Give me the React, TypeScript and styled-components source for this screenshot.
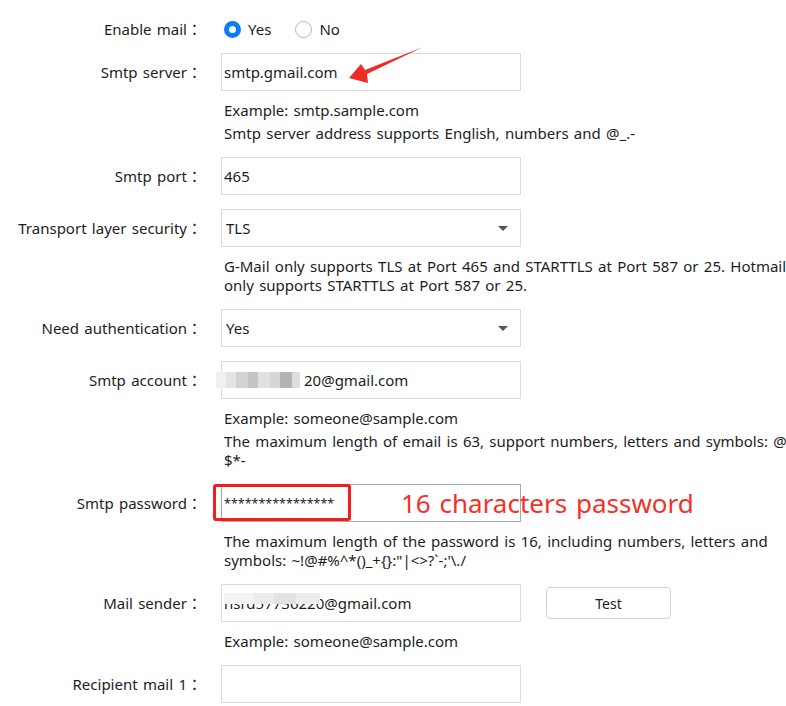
import React from 'react';
import styled, { createGlobalStyle } from 'styled-components';

const Global = createGlobalStyle`
  html, body { margin: 0; padding: 0; background: #fff; overflow: hidden; }
  body {
    font-family: "Noto Sans", "Noto Sans CJK TC", sans-serif;
    color: #1d1d1d;
    font-size: 15px;
    word-spacing: 1.4px;
  }
`;

const Page = styled.div`
  position: relative;
  width: 786px;
  height: 706px;
  overflow: hidden;
`;

const Form = styled.div`
  display: flex;
  flex-direction: column;
`;

const Row = styled.div<{ $first?: boolean }>`
  display: grid;
  grid-template-columns: 205px 1fr;
  column-gap: 16px;
  padding-top: ${(p) => (p.$first ? '10px' : '0')};
  padding-bottom: ${(p) => (p.$first ? '5px' : '14px')};
`;

const Label = styled.div`
  height: 38px;
  line-height: 38px;
  text-align: right;
  white-space: nowrap;
  padding-right: 3px;
`;

const Colon = styled.span`
  font-family: "Noto Sans CJK TC", sans-serif;
`;

const Controls = styled.div`
  position: relative;
  display: flex;
  align-items: center;
  gap: 25px;
  height: 38px;
`;

const Field = styled.div<{ $focused?: boolean }>`
  position: relative;
  box-sizing: border-box;
  width: 300px;
  height: 38px;
  border: 1px solid ${(p) => (p.$focused ? '#a9a9a9' : '#dcdcdc')};
  background: #fff;
  display: flex;
  align-items: center;
  padding-left: 2px;
  white-space: nowrap;
`;

const Select = styled(Field)`
  padding-left: 4px;
  justify-content: space-between;
  padding-right: 12px;
`;

const Caret = styled.span`
  width: 0;
  height: 0;
  border-left: 5px solid transparent;
  border-right: 5px solid transparent;
  border-top: 5px solid #555;
`;

const Secret = styled.span`
  font-size: 12.5px;
`;

const Masked = styled.span<{ $indent: number }>`
  padding-left: ${(p) => p.$indent}px;
`;

const Mosaic = styled.span<{ $left: number; $top: number; $h: number }>`
  position: absolute;
  left: ${(p) => p.$left}px;
  top: ${(p) => p.$top}px;
  height: ${(p) => p.$h}px;
  display: flex;
`;

const Cell = styled.span<{ $tone: string; $w: number }>`
  width: ${(p) => p.$w}px;
  height: 100%;
  background: ${(p) => p.$tone};
`;

const Hint = styled.div`
  grid-column: 2;
  padding-top: 10px;
  width: 570px;
  line-height: 19px;
  display: flex;
  flex-direction: column;
  gap: 4px;
  padding-left: 3px;
`;

const HintLine = styled.div``;

const Radios = styled.div`
  display: flex;
  align-items: center;
  height: 38px;
  padding-left: 3px;
  gap: 24px;
`;

const RadioOption = styled.label`
  display: flex;
  align-items: center;
  gap: 7px;
`;

const RadioDot = styled.span<{ $on?: boolean }>`
  box-sizing: border-box;
  width: 17px;
  height: 17px;
  border-radius: 50%;
  background: #fff;
  border: ${(p) => (p.$on ? '5px solid #0b7cf5' : '1px solid #b5b5b5')};
`;

const Button = styled.button`
  box-sizing: border-box;
  width: 125px;
  height: 32px;
  border: 1px solid #d2d2d2;
  border-radius: 4px;
  background: #fff;
  font: inherit;
  font-size: 14px;
  color: #222;
`;

const Highlight = styled.div`
  position: absolute;
  left: -8px;
  top: 0px;
  width: 138px;
  height: 37px;
  box-sizing: border-box;
  border: 3px solid #f21d1d;
  border-radius: 3px;
`;

const Note = styled.div`
  position: absolute;
  left: 180px;
  top: -1px;
  font-size: 26px;
  word-spacing: 2px;
  line-height: 40px;
  color: #f5302a;
  white-space: nowrap;
`;

const Arrow = styled.svg`
  position: absolute;
  left: 0;
  top: 0;
  pointer-events: none;
`;

const passwordSymbols = '~!@#%^*()_+{}:"|<>?`-;\'\\./';

export default function App() {
  return (
    <Page>
      <Global />
      <Form>
        <Row $first>
          <Label>
            Enable mail<Colon>：</Colon>
          </Label>
          <Radios>
            <RadioOption>
              <RadioDot $on />
              Yes
            </RadioOption>
            <RadioOption>
              <RadioDot />
              No
            </RadioOption>
          </Radios>
        </Row>

        <Row>
          <Label>
            Smtp server<Colon>：</Colon>
          </Label>
          <Controls>
            <Field>smtp.gmail.com</Field>
          </Controls>
          <Hint>
            <HintLine>Example: smtp.sample.com</HintLine>
            <HintLine>Smtp server address supports English, numbers and @_.-</HintLine>
          </Hint>
        </Row>

        <Row>
          <Label>
            Smtp port<Colon>：</Colon>
          </Label>
          <Controls>
            <Field>465</Field>
          </Controls>
        </Row>

        <Row>
          <Label>
            Transport layer security<Colon>：</Colon>
          </Label>
          <Controls>
            <Select>
              TLS
              <Caret />
            </Select>
          </Controls>
          <Hint>
            <HintLine>
              G-Mail only supports TLS at Port 465 and STARTTLS at Port 587 or 25. Hotmail only supports
              STARTTLS at Port 587 or 25.
            </HintLine>
          </Hint>
        </Row>

        <Row>
          <Label>
            Need authentication<Colon>：</Colon>
          </Label>
          <Controls>
            <Select>
              Yes
              <Caret />
            </Select>
          </Controls>
        </Row>

        <Row>
          <Label>
            Smtp account<Colon>：</Colon>
          </Label>
          <Controls>
            <Field>
              <Masked $indent={80}>20@gmail.com</Masked>
              <Mosaic $left={-6} $top={10} $h={16}>
                <Cell $tone="#f1f1f1" $w={10} />
                <Cell $tone="#e4e4e4" $w={10} />
                <Cell $tone="#d2d2d2" $w={12} />
                <Cell $tone="#c4c4c4" $w={10} />
                <Cell $tone="#e0e0e0" $w={12} />
                <Cell $tone="#d6d6d6" $w={10} />
                <Cell $tone="#b3b3b3" $w={12} />
                <Cell $tone="#dedede" $w={8} />
              </Mosaic>
            </Field>
          </Controls>
          <Hint>
            <HintLine>Example: someone@sample.com</HintLine>
            <HintLine>
              The maximum length of email is 63, support numbers, letters and symbols: @_ $*-
            </HintLine>
          </Hint>
        </Row>

        <Row>
          <Label>
            Smtp password<Colon>：</Colon>
          </Label>
          <Controls>
            <Field $focused>
              <Secret>****************</Secret>
            </Field>
            <Highlight />
            <Note>16 characters password</Note>
          </Controls>
          <Hint>
            <HintLine>
              {'The maximum length of the password is 16, including numbers, letters and symbols: ' +
                passwordSymbols}
            </HintLine>
          </Hint>
        </Row>

        <Row>
          <Label>
            Mail sender<Colon>：</Colon>
          </Label>
          <Controls>
            <Field>
              hsrd57736220@gmail.com
              <Mosaic $left={2} $top={8} $h={11}>
                <Cell $tone="#f4f4f4" $w={30} />
                <Cell $tone="#ececec" $w={20} />
                <Cell $tone="#e2e2e2" $w={22} />
                <Cell $tone="#ededed" $w={24} />
              </Mosaic>
            </Field>
            <Button>Test</Button>
          </Controls>
          <Hint>
            <HintLine>Example: someone@sample.com</HintLine>
          </Hint>
        </Row>

        <Row>
          <Label>
            Recipient mail 1<Colon>：</Colon>
          </Label>
          <Controls>
            <Field />
          </Controls>
        </Row>
      </Form>

      <Arrow width="786" height="706" viewBox="0 0 786 706">
        <polygon points="349,78 361,64 365,70 423,47 367,74 368,83" fill="#ee2b24" />
      </Arrow>
    </Page>
  );
}
